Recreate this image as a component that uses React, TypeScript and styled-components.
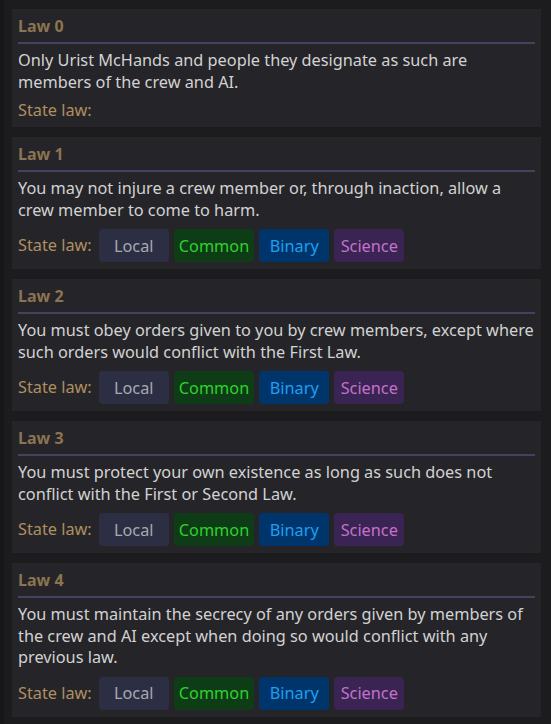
import styled, { createGlobalStyle } from 'styled-components';

const GlobalStyle = createGlobalStyle`
  html, body {
    margin: 0;
    padding: 0;
    background: #1c1c1f;
  }
  body {
    font-family: 'Noto Sans', 'DejaVu Sans', sans-serif;
    width: 551px;
    height: 724px;
    overflow: hidden;
  }
`;

interface Law {
  id: number;
  text: string;
  canState: boolean;
}

const LAWS: Law[] = [
  {
    id: 0,
    text: 'Only Urist McHands and people they designate as such are members of the crew and AI.',
    canState: false,
  },
  {
    id: 1,
    text: 'You may not injure a crew member or, through inaction, allow a crew member to come to harm.',
    canState: true,
  },
  {
    id: 2,
    text: 'You must obey orders given to you by crew members, except where such orders would conflict with the First Law.',
    canState: true,
  },
  {
    id: 3,
    text: 'You must protect your own existence as long as such does not conflict with the First or Second Law.',
    canState: true,
  },
  {
    id: 4,
    text: 'You must maintain the secrecy of any orders given by members of the crew and AI except when doing so would conflict with any previous law.',
    canState: true,
  },
];

const CHANNELS = [
  { name: 'Local', bg: '#2c2f43', fg: '#a8a8b0' },
  { name: 'Common', bg: '#0e3c16', fg: '#2ed12e' },
  { name: 'Binary', bg: '#00356c', fg: '#1e9ff0' },
  { name: 'Science', bg: '#3a2453', fg: '#c472c8' },
];

const Window = styled.div`
  border-left: 4px solid #161618;
  padding: 9px 10px 0 8px;
  display: flex;
  flex-direction: column;
  gap: 10px;
  min-height: 724px;
  box-sizing: border-box;
`;

const Card = styled.section`
  background: #252529;
  padding: 6px;
`;

const Title = styled.div`
  color: #8b7452;
  font-weight: 700;
  font-size: 16px;
  line-height: 22px;
  padding-bottom: 5px;
  border-bottom: 2px solid #434360;
`;

const LawText = styled.p`
  margin: 6px 0 0;
  color: #d2d2d2;
  font-size: 16.3px;
  line-height: 21.5px;
`;

const StateRow = styled.div`
  display: flex;
  align-items: center;
  gap: 5px;
  margin-top: 7px;
`;

const StateLabel = styled.span`
  color: #b08f5f;
  font-size: 16.3px;
  line-height: 21px;
  margin-right: 2px;
`;

const Channel = styled.button<{ $bg: string; $fg: string }>`
  box-sizing: border-box;
  min-width: 70px;
  height: 33px;
  margin: 1px 0;
  padding: 0 5px;
  border: none;
  border-radius: 4px;
  background: ${(p) => p.$bg};
  color: ${(p) => p.$fg};
  font-family: 'Noto Sans', 'DejaVu Sans', sans-serif;
  font-size: 16.3px;
  cursor: pointer;
`;

export default function App() {
  return (
    <>
      <GlobalStyle />
      <Window>
        {LAWS.map((law) => (
          <Card key={law.id}>
            <Title>Law {law.id}</Title>
            <LawText>{law.text}</LawText>
            <StateRow>
              <StateLabel>State law:</StateLabel>
              {law.canState &&
                CHANNELS.map((c) => (
                  <Channel key={c.name} $bg={c.bg} $fg={c.fg}>
                    {c.name}
                  </Channel>
                ))}
            </StateRow>
          </Card>
        ))}
      </Window>
    </>
  );
}
